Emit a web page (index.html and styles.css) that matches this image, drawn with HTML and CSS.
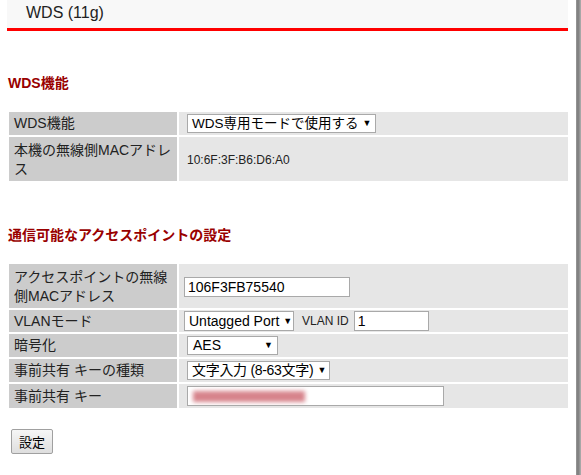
FILE: index.html
```html
<!DOCTYPE html>
<html lang="ja">
<head>
  <meta charset="UTF-8" />
  <title>WDS (11g)</title>
  <link rel="stylesheet" href="styles.css">
</head>
<body>
  <div class="page">
    <div class="content">
      <div class="title-bar">
        <span class="title">WDS (11g)</span>
      </div>

      <h2 class="section">WDS機能</h2>
      <table class="settings">
        <tr>
          <th>WDS機能</th>
          <td>
            <div class="select wds-mode">WDS専用モードで使用する<span class="arrow">▼</span></div>
          </td>
        </tr>
        <tr class="tall">
          <th>本機の無線側MACアドレス</th>
          <td><span class="mac">10:6F:3F:B6:D6:A0</span></td>
        </tr>
      </table>

      <h2 class="section">通信可能なアクセスポイントの設定</h2>
      <table class="settings">
        <tr class="tall">
          <th>アクセスポイントの無線側MACアドレス</th>
          <td class="shift"><input class="text mac-input" type="text" value="106F3FB75540"></td>
        </tr>
        <tr class="compact">
          <th>VLANモード</th>
          <td class="shift">
            <div class="inline">
              <div class="select vlan-mode">Untagged Port<span class="arrow">▼</span></div>
              <span class="vlan-label">VLAN ID</span>
              <input class="text vlan-id" type="text" value="1">
            </div>
          </td>
        </tr>
        <tr>
          <th>暗号化</th>
          <td>
            <div class="select cipher">AES<span class="arrow">▼</span></div>
          </td>
        </tr>
        <tr>
          <th>事前共有 キーの種類</th>
          <td>
            <div class="select key-type">文字入力 (8-63文字)<span class="arrow">▼</span></div>
          </td>
        </tr>
        <tr>
          <th>事前共有 キー</th>
          <td>
            <div class="text key-input"><span class="blurred"></span></div>
          </td>
        </tr>
      </table>

      <button class="submit" type="button">設定</button>
    </div>
    <div class="edge"></div>
  </div>
</body>
</html>
```

FILE: styles.css
```css
body {
  margin: 0;
  padding: 0;
  background-color: #fff;
  color: #222;
  font-family: "Liberation Sans", "Noto Sans CJK JP", sans-serif;
  font-size: 14px;
}

.page {
  display: flex;
  height: 475px;
  overflow: hidden;
}

.content {
  width: 563px;
  padding-left: 7px;
}

.edge {
  margin-left: 6px;
  width: 5px;
  background: linear-gradient(to right, #9a9a9a, #7a7a7a 40%, #b0b0b0);
}

.title-bar {
  width: 561px;
  height: 28px;
  background-color: #f8f8f8;
  border-bottom: 3px solid #ff0000;
}

.title {
  display: inline-block;
  padding-left: 19px;
  font-size: 16px;
  line-height: 26px;
  color: #222;
}

.section {
  margin: 44px 0 19px 1px;
  font-size: 14px;
  line-height: 16px;
  font-weight: bold;
  color: #990000;
}

.settings {
  width: 563px;
  border-spacing: 2px;
}

.settings th {
  width: 158px;
  padding: 2px 5px;
  background-color: #cccccc;
  font-weight: normal;
  text-align: left;
  line-height: 19px;
  vertical-align: middle;
}

.settings td {
  padding: 2px 8px;
  background-color: #e6e6e6;
  line-height: 19px;
  vertical-align: middle;
}

.settings td.shift {
  padding-left: 5px;
}

.settings tr.tall th,
.settings tr.tall td {
  padding-top: 4px;
  padding-bottom: 2px;
}

.settings tr.compact th,
.settings tr.compact td {
  padding-top: 1px;
  padding-bottom: 1px;
}

.select {
  display: flex;
  align-items: center;
  justify-content: space-between;
  box-sizing: border-box;
  height: 19px;
  padding: 0 4px 0 5px;
  background-color: #fff;
  border: 1px solid #a9a9a9;
  font-size: 14px;
  line-height: 17px;
  color: #000;
  white-space: nowrap;
  overflow: hidden;
}

.arrow {
  font-size: 9px;
  margin-left: 4px;
}

.wds-mode {
  width: 189px;
  padding-left: 4px;
  padding-right: 5px;
  font-size: 13.5px;
}

.vlan-mode {
  width: 110px;
  height: 20px;
  padding-left: 4px;
}

.cipher {
  width: 91px;
}

.key-type {
  width: 143px;
  padding-left: 4px;
  padding-right: 3px;
  letter-spacing: -0.3px;
}

.mac {
  font-size: 12px;
}

.text {
  box-sizing: border-box;
  height: 20px;
  padding: 0 3px;
  background-color: #fff;
  border: 1px solid #a9a9a9;
  font-family: "Liberation Sans", "Noto Sans CJK JP", sans-serif;
  font-size: 14px;
  color: #000;
  vertical-align: middle;
}

.mac-input {
  width: 166px;
}

.inline {
  display: flex;
  align-items: center;
}

.vlan-label {
  margin: 0 5px 0 8px;
  font-size: 12px;
}

.vlan-id {
  width: 75px;
}

.key-input {
  width: 257px;
  display: flex;
  align-items: center;
  overflow: hidden;
}

.blurred {
  display: block;
  width: 112px;
  height: 11px;
  margin-left: 2px;
  background-color: #d7848c;
  filter: blur(2px);
}

.submit {
  margin: 19px 0 0 4px;
  width: 42px;
  height: 25px;
  padding: 0;
  font-family: "Liberation Sans", "Noto Sans CJK JP", sans-serif;
  font-size: 13px;
  color: #000;
  background: linear-gradient(#f6f6f6, #dedede);
  border: 1px solid #a0a0a0;
  border-radius: 2px;
}
```
